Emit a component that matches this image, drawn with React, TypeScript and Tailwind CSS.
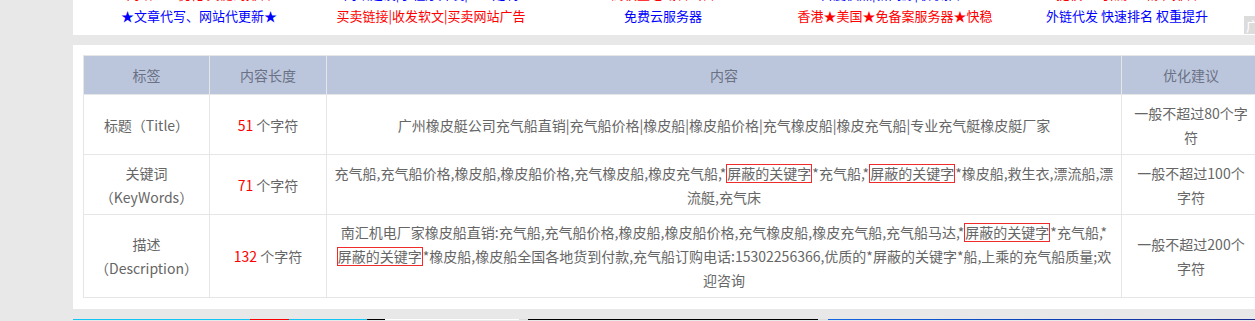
import React from "react";

const font = { fontFamily: '"Microsoft YaHei", "Noto Sans CJK SC", "Noto Sans", sans-serif' };

const cutRow = [
  { t: "网站SEO优化 关键词排名", c: "text-[#ff0000]" },
  { t: "网站建设|小程序开发|APP定制", c: "text-[#0000ff]" },
  { t: "高权重老域名出售", c: "text-[#ff0000]" },
  { t: "百度快照|新闻源|收录推广", c: "text-[#0000ff]" },
  { t: "提权 · 引流 · 精准排名", c: "text-[#ff0000]" },
];

const links = [
  { t: "★文章代写、网站代更新★", c: "text-[#0000ff]" },
  { t: "买卖链接|收发软文|买卖网站广告", c: "text-[#ff0000]" },
  { t: "免费云服务器", c: "text-[#0000ff]" },
  { t: "香港★美国★免备案服务器★快稳", c: "text-[#ff0000]" },
  { t: "外链代发 快速排名 权重提升", c: "text-[#0000ff]" },
];

function Hidden() {
  return (
    <span className="inline-block border border-[#f02b2b] leading-[17px]">屏蔽的关键字</span>
  );
}

function Td({ children, className = "px-[10px]" }: { children: React.ReactNode; className?: string }) {
  return (
    <td
      className={`h-[60px] border border-[#e6e6e6] py-[5px] text-center align-middle leading-[24px] ${className}`}
    >
      {children}
    </td>
  );
}

function Count({ n }: { n: number }) {
  return (
    <>
      <span className="text-[#ff0000]">{n}</span> 个字符
    </>
  );
}

export default function App() {
  return (
    <div className="relative h-[321px] w-[1255px] overflow-hidden bg-[#e8e8e8]" style={font}>
      <div className="ml-[73px] w-[1197px]">
        <div className="h-[35px] overflow-hidden bg-white">
          <div className="-mt-[17px] px-[10px] text-[13px]">
            <div className="grid w-[1160px] grid-cols-5">
              {cutRow.map((l) => (
                <div key={l.t} className={`h-[22px] text-center leading-[22px] ${l.c}`}>
                  {l.t}
                </div>
              ))}
            </div>
            <div className="grid w-[1160px] grid-cols-5">
              {links.map((l) => (
                <div key={l.t} className={`h-[22px] text-center leading-[22px] ${l.c}`}>
                  {l.t}
                </div>
              ))}
            </div>
          </div>
        </div>

        <div className="mt-[10px] bg-white px-[10px] pt-[10px] pb-[11px]">
          <table className="w-[1177px] table-fixed border-collapse text-[14px] text-[#666]">
            <colgroup>
              <col className="w-[126px]" />
              <col className="w-[117px]" />
              <col className="w-[795px]" />
              <col className="w-[139px]" />
            </colgroup>
            <thead>
              <tr className="bg-[#bbc6dd] text-[#6b7184]">
                {["标签", "内容长度", "内容", "优化建议"].map((h) => (
                  <th
                    key={h}
                    className="h-[39px] border border-[#e6e6e6] text-center font-normal leading-[24px]"
                  >
                    {h}
                  </th>
                ))}
              </tr>
            </thead>
            <tbody>
              <tr>
                <Td>标题（Title）</Td>
                <Td>
                  <Count n={51} />
                </Td>
                <Td className="px-[3px] whitespace-nowrap">
                  广州橡皮艇公司充气船直销|充气船价格|橡皮船|橡皮船价格|充气橡皮船|橡皮充气船|专业充气艇橡皮艇厂家
                </Td>
                <Td>一般不超过80个字符</Td>
              </tr>
              <tr>
                <Td>
                  关键词
                  <br />
                  （KeyWords）
                </Td>
                <Td>
                  <Count n={71} />
                </Td>
                <Td className="px-[3px] whitespace-nowrap">
                  充气船,充气船价格,橡皮船,橡皮船价格,充气橡皮船,橡皮充气船,*<Hidden />*充气船,*<Hidden />
                  *橡皮船,救生衣,漂流船,漂
                  <br />
                  流艇,充气床
                </Td>
                <Td>一般不超过100个字符</Td>
              </tr>
              <tr>
                <Td>
                  描述
                  <br />
                  （Description）
                </Td>
                <Td>
                  <Count n={132} />
                </Td>
                <Td className="px-[3px] whitespace-nowrap">
                  南汇机电厂家橡皮船直销:充气船,充气船价格,橡皮船,橡皮船价格,充气橡皮船,橡皮充气船,充气船马达,*<Hidden />
                  *充气船,*
                  <br />
                  <Hidden />
                  *橡皮船,橡皮船全国各地货到付款,充气船订购电话:15302256366,优质的*屏蔽的关键字*船,上乘的充气船质量;欢
                  <br />
                  迎咨询
                </Td>
                <Td>一般不超过200个字符</Td>
              </tr>
            </tbody>
          </table>
        </div>

        <div className="mt-[10px] flex h-[1px]">
          <div className="w-[177px] bg-[#13c3f3]" />
          <div className="w-[39px] bg-[#ff0000]" />
          <div className="w-[78px] bg-[#13c3f3]" />
          <div className="w-[18px] bg-black" />
          <div className="w-[134px] bg-white" />
          <div className="w-[9px] bg-[#dddddd]" />
          <div className="w-[290px] bg-black" />
          <div className="w-[10px] bg-[#dddddd]" />
          <div className="flex-1 bg-gradient-to-r from-[#1466e0] via-[#0a3fb8] to-[#1c2a8c]" />
        </div>
      </div>

      <div className="absolute left-[1244px] top-[16px] flex h-[18px] w-[30px] items-center bg-[#dcdcdc] pl-[2px] text-[13px] leading-none text-white">
        广告
      </div>
    </div>
  );
}
